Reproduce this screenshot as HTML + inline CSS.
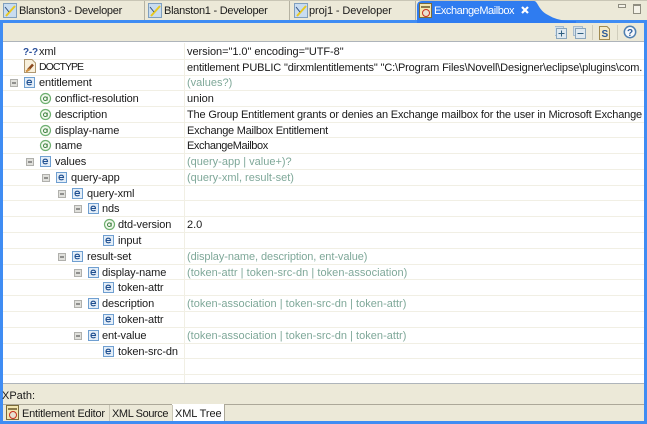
<!DOCTYPE html>
<html><head><meta charset="utf-8">
<style>
html,body{margin:0;padding:0;background:#ece9d8}
#p{position:relative;width:647px;height:424px;overflow:hidden;background:#ece9d8;font-family:"Liberation Sans",sans-serif;font-size:11px;color:#1a1a1a}
#p div,#p svg,#p span.a{position:absolute}
.t{white-space:nowrap;line-height:14px;height:14px}
.l{letter-spacing:-.1px}
.g{color:#7fa899}
.rl{left:3px;width:641px;height:1px;background:#f1efe4}
</style></head><body><div id="p">

<!-- blue frame -->
<div style="left:0;top:20px;width:647px;height:3px;background:#3f8cf3"></div>
<div style="left:0;top:20px;width:3px;height:404px;background:#3f8cf3"></div>
<div style="left:644px;top:20px;width:3px;height:404px;background:#3f8cf3"></div>
<div style="left:0;top:421px;width:647px;height:3px;background:#3f8cf3"></div>

<!-- top tabs -->
<div style="left:0;top:0;width:647px;height:1px;background:#c9c6b6"></div>
<div style="left:144px;top:1px;width:1px;height:19px;background:#b5b2a2"></div>
<div style="left:289px;top:1px;width:1px;height:19px;background:#b5b2a2"></div>
<div style="left:415px;top:1px;width:1px;height:19px;background:#b5b2a2"></div>
<svg style="left:416px;top:0" width="160" height="23" viewBox="0 0 160 23"><path d="M1 23V6Q1 1 6 1H118C122 1 122 10 132 15Q140 20 152 21H160V23Z" fill="#2f7cf0"/></svg>

<svg style="left:3px;top:3px" width="15" height="16" viewBox="0 0 15 16"><rect x=".5" y=".5" width="13" height="14" fill="#c8dcf0" stroke="#7f9fbf"/><path d="M3 13L12 3" stroke="#e8c820" stroke-width="2"/><path d="M2 4L6 9" stroke="#304f7f"/></svg>
<svg style="left:148px;top:3px" width="15" height="16" viewBox="0 0 15 16"><rect x=".5" y=".5" width="13" height="14" fill="#c8dcf0" stroke="#7f9fbf"/><path d="M3 13L12 3" stroke="#e8c820" stroke-width="2"/><path d="M2 4L6 9" stroke="#304f7f"/></svg>
<svg style="left:294px;top:3px" width="15" height="16" viewBox="0 0 15 16"><rect x=".5" y=".5" width="13" height="14" fill="#c8dcf0" stroke="#7f9fbf"/><path d="M3 13L12 3" stroke="#e8c820" stroke-width="2"/><path d="M2 4L6 9" stroke="#304f7f"/></svg>
<svg style="left:419px;top:3px" width="13" height="15" viewBox="0 0 13 15"><rect x=".5" y=".5" width="12" height="14" fill="#f3e6b0" stroke="#7a6a3a"/><rect x="2" y="3" width="9" height="2" fill="#8a7a4a"/><circle cx="7" cy="10" r="3.500" fill="#e8e0d0" stroke="#c83020"/></svg>

<div class="t" style="left:19px;top:4px;letter-spacing:-.28px">Blanston3 - Developer</div>
<div class="t" style="left:164px;top:4px;letter-spacing:-.25px">Blanston1 - Developer</div>
<div class="t" style="left:309px;top:4px;letter-spacing:-.1px">proj1 - Developer</div>
<div class="t" style="left:434px;top:4px;color:#fff;letter-spacing:-.45px">ExchangeMailbox</div>
<svg style="left:520px;top:5px" width="10" height="10" viewBox="0 0 10 10"><path d="M2 2L8 8M8 2L2 8" stroke="#fff" stroke-width="2.200"/></svg>
<div style="left:618px;top:4px;width:6px;height:2px;border:1px solid #8f8d80;background:#f4f2e8"></div>
<div style="left:633px;top:4px;width:6px;height:7px;border:1px solid #8f8d80;border-top:2px solid #8f8d80;background:#f4f2e8"></div>

<!-- toolbar -->
<svg style="left:555px;top:24px" width="90" height="17" viewBox="0 0 90 17">
<rect x="-.5" y="2.500" width="9" height="9" fill="#d5e2ec" stroke="#a8bccc"/><rect x="1.500" y="4.500" width="10" height="10" fill="#dfe9f0" stroke="#8aa6bc"/><path d="M6.500 6.500V12.500M3.500 9.500H9.500" stroke="#2f5f80"/>
<rect x="18.500" y="2.500" width="9" height="9" fill="#d5e2ec" stroke="#a8bccc"/><rect x="20.500" y="4.500" width="10" height="10" fill="#dfe9f0" stroke="#8aa6bc"/><path d="M22.500 9.500H28.500" stroke="#2f5f80"/>
<path d="M37.500 1V16" stroke="#d0cdbc"/>
<path d="M44.500 2.500H52L54.500 5V15.500H44.500Z" fill="#f5e9c4" stroke="#a08a50"/><text x="46.500" y="13" font-family="Liberation Sans" font-weight="bold" font-size="10" fill="#2a5a9a">S</text>
<path d="M62.500 1V16" stroke="#d0cdbc"/>
<circle cx="75" cy="8" r="5.700" fill="#f6f8fc" stroke="#4f7fb0" stroke-width="1.500"/><text x="72" y="12" font-family="Liberation Sans" font-weight="bold" font-size="10" fill="#2f5f9a">?</text>
</svg>
<div style="left:3px;top:41px;width:641px;height:1px;background:#aeb4ba"></div>

<!-- table -->
<div style="left:3px;top:42px;width:641px;height:341px;background:#fff"></div>
<div style="left:184px;top:43px;width:1px;height:340px;background:#f1efe4"></div>
<div class="rl" style="top:59px"></div><div class="rl" style="top:75px"></div><div class="rl" style="top:90px"></div><div class="rl" style="top:106px"></div><div class="rl" style="top:122px"></div><div class="rl" style="top:137px"></div><div class="rl" style="top:153px"></div><div class="rl" style="top:169px"></div><div class="rl" style="top:185px"></div><div class="rl" style="top:200px"></div><div class="rl" style="top:216px"></div><div class="rl" style="top:232px"></div><div class="rl" style="top:248px"></div><div class="rl" style="top:264px"></div><div class="rl" style="top:279px"></div><div class="rl" style="top:295px"></div><div class="rl" style="top:311px"></div><div class="rl" style="top:327px"></div><div class="rl" style="top:343px"></div><div class="rl" style="top:358px"></div><div class="rl" style="top:374px"></div>

<svg style="left:0;top:0" width="190" height="380" viewBox="0 0 190 380">
<defs>
<g id="e"><rect x=".5" y=".5" width="10" height="10" fill="#e4eef8" stroke="#6f9fd0"/><path d="M3 5.500H7.500Q7.500 3.200 5.300 3.200Q3 3.200 3 5.500Q3 7.800 5.300 7.800Q6.800 7.800 7.500 7" fill="none" stroke="#1f4f90" stroke-width="1.100"/></g>
<g id="a"><circle cx="5.500" cy="5.500" r="5" fill="#f2f9ee" stroke="#6fb070" stroke-width="1.200"/><circle cx="5.300" cy="5.700" r="1.800" fill="none" stroke="#3f7f40"/><path d="M7.200 3.700V7.500" stroke="#3f7f40"/></g>
<g id="m"><rect x=".5" y=".5" width="7" height="7" fill="#e0e0dc" stroke="#b0b0ac"/><path d="M2 4H6" stroke="#404040"/></g>
<g id="p"><rect x=".5" y=".5" width="7" height="7" fill="#e0e0dc" stroke="#b0b0ac"/><path d="M2 4H6M4 2V6" stroke="#404040"/></g>
</defs>
<text x="23" y="55" font-family="Liberation Sans" font-weight="bold" font-size="10" fill="#2a4f9a" letter-spacing="-.2">?-?</text>
<g transform="translate(24,59)"><path d="M.5 .5H8L11.500 4V13.500H.5Z" fill="#f8f0dc" stroke="#b09870"/><path d="M4 11L9 5.500" stroke="#8a4a20" stroke-width="2.500"/><path d="M2 12.500L6 10" stroke="#d09040" stroke-width="2"/></g>
<use href="#m" x="10" y="79"/><use href="#e" x="24" y="77"/>
<use href="#a" x="40" y="93"/><use href="#a" x="40" y="109"/><use href="#a" x="40" y="125"/><use href="#a" x="40" y="140"/>
<use href="#m" x="26" y="158"/><use href="#e" x="40" y="156"/>
<use href="#m" x="42" y="174"/><use href="#e" x="56" y="172"/>
<use href="#m" x="58" y="190"/><use href="#e" x="72" y="188"/>
<use href="#m" x="74" y="205"/><use href="#e" x="88" y="203"/>
<use href="#a" x="104" y="219"/>
<use href="#p" x="89" y="237"/><use href="#e" x="103" y="235"/>
<use href="#m" x="58" y="253"/><use href="#e" x="72" y="251"/>
<use href="#m" x="74" y="269"/><use href="#e" x="88" y="267"/>
<use href="#p" x="89" y="284"/><use href="#e" x="103" y="282"/>
<use href="#m" x="74" y="300"/><use href="#e" x="88" y="298"/>
<use href="#p" x="89" y="316"/><use href="#e" x="103" y="314"/>
<use href="#m" x="74" y="332"/><use href="#e" x="88" y="330"/>
<use href="#e" x="103" y="346"/>
</svg>

<div class="t l" style="left:39px;top:45px">xml</div>
<div class="t" style="left:39px;top:60px;font-size:10.500px;letter-spacing:-.95px">DOCTYPE</div>
<div class="t l" style="left:39px;top:76px">entitlement</div>
<div class="t l" style="left:55px;top:92px">conflict-resolution</div>
<div class="t l" style="left:55px;top:108px">description</div>
<div class="t l" style="left:55px;top:124px">display-name</div>
<div class="t l" style="left:55px;top:139px">name</div>
<div class="t l" style="left:55px;top:155px">values</div>
<div class="t l" style="left:71px;top:171px">query-app</div>
<div class="t l" style="left:87px;top:187px">query-xml</div>
<div class="t l" style="left:102px;top:202px">nds</div>
<div class="t l" style="left:118px;top:218px">dtd-version</div>
<div class="t l" style="left:118px;top:234px">input</div>
<div class="t l" style="left:87px;top:250px">result-set</div>
<div class="t l" style="left:102px;top:266px">display-name</div>
<div class="t l" style="left:118px;top:281px">token-attr</div>
<div class="t l" style="left:102px;top:297px">description</div>
<div class="t l" style="left:118px;top:313px">token-attr</div>
<div class="t l" style="left:102px;top:329px">ent-value</div>
<div class="t l" style="left:118px;top:345px">token-src-dn</div>

<div class="t" style="left:187px;top:45px;letter-spacing:-.05px">version="1.0" encoding="UTF-8"</div>
<div class="t" style="left:187px;top:61px;width:457px;overflow:hidden;letter-spacing:-.14px">entitlement PUBLIC "dirxmlentitlements" "C:\Program Files\Novell\Designer\eclipse\plugins\com.</div>
<div class="t g" style="left:187px;top:76px">(values?)</div>
<div class="t" style="left:187px;top:92px">union</div>
<div class="t" style="left:187px;top:108px;width:457px;overflow:hidden;letter-spacing:-.17px">The Group Entitlement grants or denies an Exchange mailbox for the user in Microsoft Exchange</div>
<div class="t" style="left:187px;top:124px;letter-spacing:-.25px">Exchange Mailbox Entitlement</div>
<div class="t" style="left:187px;top:139px;letter-spacing:-.4px">ExchangeMailbox</div>
<div class="t g" style="left:187px;top:155px">(query-app | value+)?</div>
<div class="t g" style="left:187px;top:171px">(query-xml, result-set)</div>
<div class="t" style="left:187px;top:218px">2.0</div>
<div class="t g" style="left:187px;top:250px;letter-spacing:-.08px">(display-name, description, ent-value)</div>
<div class="t g" style="left:187px;top:266px;letter-spacing:.04px">(token-attr | token-src-dn | token-association)</div>
<div class="t g" style="left:187px;top:297px;letter-spacing:.02px">(token-association | token-src-dn | token-attr)</div>
<div class="t g" style="left:187px;top:329px;letter-spacing:.02px">(token-association | token-src-dn | token-attr)</div>

<!-- bottom -->
<div style="left:3px;top:383px;width:641px;height:1px;background:#aeb4ba"></div>
<div class="t" style="left:2px;top:389px">XPath:</div>
<div style="left:3px;top:404px;width:641px;height:1px;background:#aca899"></div>
<div style="left:172px;top:404px;width:52px;height:17px;background:#fff"></div>
<div style="left:109px;top:405px;width:1px;height:16px;background:#c9c6b6"></div>
<div style="left:172px;top:405px;width:1px;height:16px;background:#c9c6b6"></div>
<div style="left:224px;top:405px;width:1px;height:16px;background:#aca899"></div>
<svg style="left:6px;top:405px" width="13" height="15" viewBox="0 0 13 15"><rect x=".5" y=".5" width="12" height="14" fill="#f3e6b0" stroke="#7a6a3a"/><rect x="2" y="3" width="9" height="2" fill="#8a7a4a"/><circle cx="7" cy="10" r="3.500" fill="#e8e0d0" stroke="#c83020"/></svg>
<div class="t" style="left:22px;top:407px;letter-spacing:-.22px">Entitlement Editor</div>
<div class="t" style="left:112px;top:407px;letter-spacing:-.4px">XML Source</div>
<div class="t" style="left:175px;top:407px;letter-spacing:-.1px">XML Tree</div>

</div></body></html>
